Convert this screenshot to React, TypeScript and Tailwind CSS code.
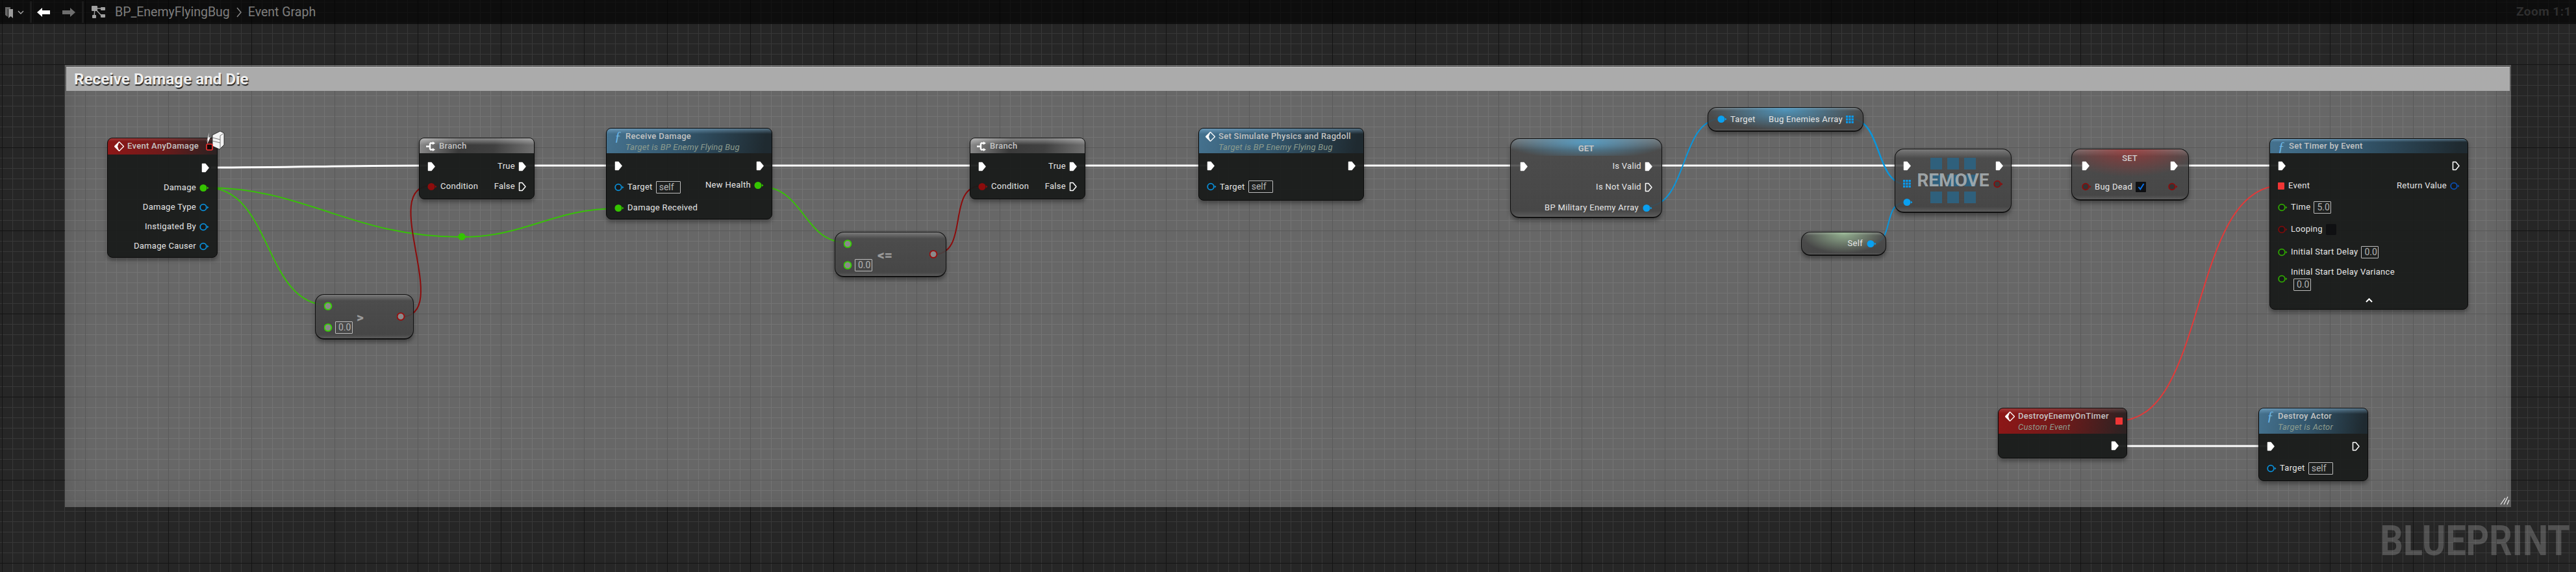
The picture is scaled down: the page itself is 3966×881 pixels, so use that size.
import React from "react";

const wires = [
  // exec
  { d: "M325 258 C 440 258, 540 255, 658 255", stroke: "#ffffff", width: 3 },
  { d: "M808 255 L 958 255", stroke: "#ffffff", width: 3 },
  { d: "M1173 255 L 1506 255", stroke: "#ffffff", width: 3 },
  { d: "M1656 255 L 1870 255", stroke: "#ffffff", width: 3 },
  { d: "M2085 255 L 2345 255", stroke: "#ffffff", width: 3 },
  { d: "M2540 255 L 2935 255", stroke: "#ffffff", width: 3 },
  { d: "M3080 255 L 3210 255", stroke: "#ffffff", width: 3 },
  { d: "M3345 255 L 3512 255", stroke: "#ffffff", width: 3 },
  { d: "M3256 687 L 3495 687", stroke: "#ffffff", width: 3 },
  // float
  { d: "M318 289 C 470 289, 540 365, 711 365", stroke: "#38c008", width: 2 },
  { d: "M711 365 C 810 365, 850 321, 952 321", stroke: "#38c008", width: 2 },
  { d: "M318 289 C 420 289, 405 470, 505 470", stroke: "#38c008", width: 2 },
  { d: "M1168 287 C 1240 287, 1235 374, 1305 374", stroke: "#38c008", width: 2 },
  // bool
  { d: "M617 488 C 700 488, 580 286, 664 286", stroke: "#8c0c0c", width: 2 },
  { d: "M1437 392 C 1495 392, 1455 286, 1512 286", stroke: "#8c0c0c", width: 2 },
  // object
  { d: "M2535 318 C 2600 318, 2585 183, 2650 183", stroke: "#0a96dc", width: 2 },
  { d: "M2848 183 C 2900 183, 2885 284, 2936 284", stroke: "#0a96dc", width: 2.5 },
  { d: "M2880 375 C 2920 375, 2895 311, 2936 311", stroke: "#0a96dc", width: 2 },
  // delegate
  { d: "M3262 648 C 3400 648, 3370 286, 3512 286", stroke: "#e23a3a", width: 2 },
];

function ExecPin({ filled = true }: { filled?: boolean }) {
  return (
    <svg width="12" height="15" viewBox="0 0 12 15" className="shrink-0">
      <path
        d="M1.5 1.5 H6 L11 7.5 L6 13.5 H1.5 Z"
        fill={filled ? "#ffffff" : "none"}
        stroke="#ffffff"
        strokeWidth="1.5"
        strokeLinejoin="round"
      />
    </svg>
  );
}

function DataPin({
  color,
  filled = false,
  inner = "#17191a",
  arrow = true,
  r = 4.8,
}: {
  color: string;
  filled?: boolean;
  inner?: string;
  arrow?: boolean;
  r?: number;
}) {
  return (
    <svg width="15" height="13" viewBox="0 0 15 13" className="shrink-0">
      <circle cx="6" cy="6.5" r={filled ? 5.5 : r} fill={filled ? color : inner} stroke={color} strokeWidth={filled ? 0 : 1.8} />
      {arrow && <path d="M12 4.5 L14.5 6.5 L12 8.5 Z" fill={color} />}
    </svg>
  );
}

function GridPin() {
  return (
    <svg width="12" height="12" viewBox="0 0 12 12" className="shrink-0">
      {[0, 4.3, 8.6].map((x) =>
        [0, 4.3, 8.6].map((y) => <rect key={`${x}-${y}`} x={x} y={y} width="3.2" height="3.2" fill="#0a9cf0" />),
      )}
    </svg>
  );
}

function EventIcon() {
  return (
    <svg width="15" height="15" viewBox="0 0 15 15" className="shrink-0">
      <path d="M7.5 0.5 L14.5 7.5 L7.5 14.5 L0.5 7.5 Z" fill="none" stroke="#ffffff" strokeWidth="1.4" />
      <path d="M7.5 0.5 L0.5 7.5 L7.5 14.5 L5 7.5 Z" fill="#ffffff" />
    </svg>
  );
}

function BranchIcon() {
  return (
    <svg width="15" height="15" viewBox="0 0 15 15" className="shrink-0">
      <path d="M0 7.5 H6 M6 2.5 V12.5 M6 2.5 H11 M6 12.5 H11" stroke="#ffffff" strokeWidth="2.4" fill="none" />
      <path d="M10 0 L14 2.5 L10 5 Z M10 10 L14 12.5 L10 15 Z" fill="#ffffff" />
    </svg>
  );
}

function FnIcon() {
  return <span className="w-[12px] shrink-0 font-['Liberation_Serif',serif] text-[21px] italic leading-none text-[#6db7e6]">ƒ</span>;
}

function ValueBox({ children, className = "" }: { children: React.ReactNode; className?: string }) {
  return (
    <span className={`flex h-[19px] shrink-0 items-center rounded-[1px] border border-[#bdbdbd] pl-[4px] text-[14px] text-[#b4b4b4] ${className}`}>
      {children}
    </span>
  );
}

function Row({ children, className = "" }: { children: React.ReactNode; className?: string }) {
  return <div className={`flex items-center justify-between ${className}`}>{children}</div>;
}

function Label({ children, className = "" }: { children: React.ReactNode; className?: string }) {
  return <span className={`whitespace-nowrap text-[13px] tracking-[0.3px] text-[#e6e6e6] ${className}`}>{children}</span>;
}

function Group({ children, className = "" }: { children: React.ReactNode; className?: string }) {
  return <span className={`flex items-center gap-[5px] ${className}`}>{children}</span>;
}

function Card({ className, children }: { className: string; children: React.ReactNode }) {
  return (
    <div className={`absolute flex flex-col overflow-hidden rounded-[8px] border border-[#0b0b0b] bg-[#191b1a]/95 shadow-[0_4px_6px_rgba(0,0,0,0.35)] ${className}`}>
      {children}
    </div>
  );
}

function Pure({ className, children }: { className: string; children: React.ReactNode }) {
  return (
    <div className={`absolute overflow-hidden rounded-[14px] border border-b-2 border-[#111111] bg-[linear-gradient(180deg,rgba(125,125,125,0.88),rgba(72,72,72,0.88)_14%,rgba(66,66,66,0.88)_92%,rgba(90,90,90,0.9))] shadow-[0_4px_6px_rgba(0,0,0,0.35)] ${className}`}>
      {children}
    </div>
  );
}

const blueHeader =
  "bg-[linear-gradient(180deg,rgba(150,200,235,0.45),transparent_22%),linear-gradient(100deg,#45728f,#33566c_45%,#1f2a30_95%)]";
const redHeader =
  "bg-[linear-gradient(180deg,rgba(255,200,200,0.18),transparent_20%),linear-gradient(100deg,#8e1717,#6f1a1a_50%,#2c2222_98%)]";
const grayHeader =
  "bg-[linear-gradient(180deg,rgba(255,255,255,0.4),transparent_45%),linear-gradient(100deg,#8c8c8c,#3a3a3a_35%,#404040_65%,#707070)]";

function Header({
  tone,
  icon,
  title,
  sub,
  className = "",
}: {
  tone: string;
  icon: React.ReactNode;
  title: string;
  sub?: string;
  className?: string;
}) {
  return (
    <div className={`flex shrink-0 gap-[5px] pl-[10px] ${tone} ${className}`}>
      <span className="flex h-[24px] items-center">{icon}</span>
      <div className="flex flex-col">
        <span className="flex h-[24px] items-center whitespace-nowrap text-[13px] font-medium tracking-[0.3px] text-[#c4c4c4]">{title}</span>
        {sub && <span className="-mt-[3px] whitespace-nowrap text-[13px] italic leading-[16px] tracking-[0.2px] text-[#8d9c8e]">{sub}</span>}
      </div>
    </div>
  );
}

function BranchNode({ className }: { className: string }) {
  return (
    <Card className={className}>
      <Header tone={grayHeader} icon={<BranchIcon />} title="Branch" className="h-[23px]" />
      <div className="flex flex-col px-[12px] pt-[4px]">
        <Row className="h-[32px]">
          <ExecPin />
          <Group>
            <Label>True</Label>
            <ExecPin />
          </Group>
        </Row>
        <Row className="h-[30px]">
          <Group>
            <DataPin color="#8c0c0c" filled />
            <Label>Condition</Label>
          </Group>
          <Group>
            <Label>False</Label>
            <ExecPin filled={false} />
          </Group>
        </Row>
      </div>
    </Card>
  );
}

function CompareNode({ className, op, opClass }: { className: string; op: string; opClass: string }) {
  return (
    <Pure className={className}>
      <div className="flex h-full items-center pl-[13px] pr-[5px]">
        <div className="flex flex-col">
          <div className="flex h-[33px] items-center">
            <DataPin color="#35d400" inner="#8a8a8a" arrow={false} r={5.4} />
          </div>
          <div className="flex h-[33px] items-center gap-[2px]">
            <DataPin color="#35d400" inner="#8a8a8a" arrow={false} r={5.4} />
            <ValueBox className="w-[27px]">0.0</ValueBox>
          </div>
        </div>
        <span className={`mt-[4px] text-[21px] font-black leading-none text-[#9a9a9a] ${opClass}`}>{op}</span>
        <span className="ml-auto mr-[5px]">
          <DataPin color="#9a0c0c" inner="#8a8a8a" arrow={false} r={5.4} />
        </span>
      </div>
    </Pure>
  );
}

function TargetRow({ className = "" }: { className?: string }) {
  return (
    <Group className={className}>
      <DataPin color="#0a8fd8" />
      <Label>Target</Label>
      <ValueBox className="w-[38px]">self</ValueBox>
    </Group>
  );
}

export default function App() {
  return (
    <div className="relative h-[881px] w-full overflow-hidden bg-[#262626] bg-[linear-gradient(#141414_1px,transparent_1px),linear-gradient(90deg,#141414_1px,transparent_1px),linear-gradient(#383838_1px,transparent_1px),linear-gradient(90deg,#383838_1px,transparent_1px)] bg-[size:128px_128px,128px_128px,16px_16px,16px_16px] bg-[position:0_99px,3px_0,0_3px,3px_0] font-['Roboto',sans-serif]">
      {/* comment box */}
      <div className="absolute left-[100px] top-[100px] h-[681px] w-[3766px] bg-white/30 px-[2px] pt-[3px] shadow-[inset_0_0_40px_rgba(0,0,0,0.12)]">
        <div className="flex h-[37px] items-center border-t border-t-[#c4c4c4] bg-[#ababab] pl-[12px] text-[24px] font-bold tracking-[0.1px] text-[#efefef] [text-shadow:1px_2px_1px_#222222]">
          Receive Damage and Die
        </div>
        <svg width="15" height="14" viewBox="0 0 15 14" className="absolute bottom-[3px] right-[2px]">
          <path d="M1 13 L8 3 M6 13 L12 1 M11 13 L14 6" stroke="#f0f0f0" strokeWidth="1.2" fill="none" />
        </svg>
      </div>

      {/* wires */}
      <svg className="absolute inset-0 h-full w-full">
        {wires.map((w) => (
          <path key={w.d} d={w.d} stroke={w.stroke} strokeWidth={w.width} fill="none" />
        ))}
      </svg>

      {/* Event AnyDamage */}
      <Card className="left-[165px] top-[212px] h-[185px] w-[170px]">
        <Header tone={redHeader} icon={<EventIcon />} title="Event AnyDamage" className="h-[25px]" />
        <div className="flex flex-col items-end px-[12px] pt-[5px]">
          <Row className="h-[31px]">
            <ExecPin />
          </Row>
          {["Damage", "Damage Type", "Instigated By", "Damage Causer"].map((name, i) => (
            <Row key={name} className="h-[30px]">
              <Group>
                <Label>{name}</Label>
                {i === 0 ? <DataPin color="#35c400" filled /> : <DataPin color="#0a8fd8" />}
              </Group>
            </Row>
          ))}
        </div>
      </Card>
      {/* delegate pin and cube sit over the corner of the node */}
      <svg width="40" height="34" viewBox="0 0 40 34" className="absolute left-[315px] top-[199px]">
        <path d="M3 20 L7 5 L6 13 L9 12 L4 23 L5 15 Z" fill="#ffffff" />
        <path d="M12 9 L24 3 L30 6 V24 L23 31 L12 26 Z" fill="#f2f2f2" stroke="#111111" strokeWidth="0.8" />
        <path d="M24 10 V30 M24 10 L30 6 M12 13 L24 16 M12 18 L24 21" stroke="#777777" strokeWidth="1" fill="none" />
        <rect x="3" y="23" width="9" height="9" rx="1.5" fill="#150505" stroke="#f23030" strokeWidth="1.6" />
      </svg>

      <BranchNode className="left-[645px] top-[212px] h-[95px] w-[178px]" />
      <CompareNode className="left-[485px] top-[453px] h-[70px] w-[152px]" op=">" opClass="ml-[6px]" />

      {/* reroute knot */}
      <span className="absolute left-[705px] top-[358px]">
        <DataPin color="#35c400" filled />
      </span>

      {/* Receive Damage */}
      <Card className="left-[933px] top-[197px] h-[141px] w-[256px]">
        <Header tone={blueHeader} icon={<FnIcon />} title="Receive Damage" sub="Target is BP Enemy Flying Bug" className="h-[38px] pl-[12px]" />
        <div className="flex flex-col px-[12px] pt-[3px]">
          <Row className="h-[32px]">
            <ExecPin />
            <ExecPin />
          </Row>
          <Row className="h-[34px]">
            <TargetRow />
            <Group className="mb-[6px]">
              <Label>New Health</Label>
              <DataPin color="#35c400" filled />
            </Group>
          </Row>
          <Row className="h-[30px]">
            <Group>
              <DataPin color="#35c400" filled />
              <Label>Damage Received</Label>
            </Group>
          </Row>
        </div>
      </Card>

      <CompareNode className="left-[1285px] top-[357px] h-[70px] w-[172px]" op="<=" opClass="ml-[8px]" />
      <BranchNode className="left-[1493px] top-[212px] h-[95px] w-[178px]" />

      {/* Set Simulate Physics and Ragdoll */}
      <Card className="left-[1845px] top-[197px] h-[112px] w-[255px]">
        <Header tone={blueHeader} icon={<EventIcon />} title="Set Simulate Physics and Ragdoll" sub="Target is BP Enemy Flying Bug" className="h-[38px]" />
        <div className="flex flex-col px-[12px] pt-[3px]">
          <Row className="h-[32px]">
            <ExecPin />
            <ExecPin />
          </Row>
          <Row className="h-[33px]">
            <TargetRow />
          </Row>
        </div>
      </Card>

      {/* GET */}
      <Pure className="left-[2325px] top-[213px] h-[123px] w-[234px]">
        <div className="bg-[radial-gradient(ellipse_55%_100%_at_50%_20%,rgba(80,170,220,0.75),transparent)] pt-[4px] text-center text-[13px] font-bold text-[#c4c4c4]">
          <span className="block h-[22px] leading-[22px]">GET</span>
        </div>
        <div className="flex flex-col px-[14px]">
          <Row className="h-[32px]">
            <ExecPin />
            <Group>
              <Label>Is Valid</Label>
              <ExecPin />
            </Group>
          </Row>
          <Row className="h-[32px]">
            <span />
            <Group>
              <Label>Is Not Valid</Label>
              <ExecPin filled={false} />
            </Group>
          </Row>
          <Row className="h-[32px]">
            <span />
            <Group className="gap-[6px]">
              <Label>BP Military Enemy Array</Label>
              <DataPin color="#0aa0f0" filled />
            </Group>
          </Row>
        </div>
      </Pure>

      {/* Bug Enemies Array getter */}
      <Pure className="left-[2629px] top-[165px] h-[38px] w-[240px]">
        <Row className="h-full bg-[radial-gradient(ellipse_50%_90%_at_50%_10%,rgba(80,170,220,0.75),transparent)] px-[14px]">
          <Group>
            <DataPin color="#0aa0f0" filled />
            <Label>Target</Label>
          </Group>
          <Group>
            <Label>Bug Enemies Array</Label>
            <GridPin />
          </Group>
        </Row>
      </Pure>

      {/* REMOVE */}
      <Pure className="left-[2917px] top-[229px] h-[99px] w-[180px]">
        <div className="flex justify-between px-[12px] pt-[11px]">
          <div className="flex flex-col">
            <div className="flex h-[28px] items-center">
              <ExecPin />
            </div>
            <div className="flex h-[28px] items-center">
              <GridPin />
            </div>
            <div className="flex h-[28px] items-center">
              <DataPin color="#0aa0f0" filled />
            </div>
          </div>
          <div className="relative mt-[2px] self-start">
            <div className="grid grid-cols-3 gap-[8px]">
              {Array.from({ length: 9 }).map((_, i) => (
                <span key={i} className="h-[18px] w-[18px] bg-[#2f607c]" />
              ))}
            </div>
            <span className="absolute inset-0 flex items-center justify-center text-[28px] font-bold leading-none text-[#a9b0b3]/90">REMOVE</span>
          </div>
          <div className="flex flex-col">
            <div className="flex h-[28px] items-center justify-end">
              <ExecPin />
            </div>
            <div className="flex h-[28px] items-center justify-end">
              <DataPin color="#8c0c0c" inner="#3a3a3a" />
            </div>
          </div>
        </div>
      </Pure>

      {/* Self */}
      <Pure className="left-[2773px] top-[357px] h-[37px] w-[131px]">
        <div className="flex h-full items-center justify-end gap-[6px] bg-[radial-gradient(ellipse_50%_90%_at_50%_5%,rgba(175,215,170,0.7),transparent)] pr-[14px]">
          <Label>Self</Label>
          <DataPin color="#0aa0f0" filled />
        </div>
      </Pure>

      {/* SET */}
      <Pure className="left-[3189px] top-[229px] h-[80px] w-[181px]">
        <div className="h-full bg-[radial-gradient(ellipse_60%_55%_at_50%_0%,rgba(170,50,50,0.7),transparent)] pl-[15px] pr-[16px] pt-[9px]">
          <Row className="h-[32px]">
            <ExecPin />
            <span className="mb-[22px] text-[13px] font-medium text-[#cfcfcf]">SET</span>
            <ExecPin />
          </Row>
          <Row className="h-[33px]">
            <Group>
              <DataPin color="#8c0c0c" inner="#333333" />
              <Label>Bug Dead</Label>
              <span className="flex h-[16px] w-[16px] items-center justify-center rounded-[1px] bg-[#0f1012]">
                <svg width="11" height="11" viewBox="0 0 11 11">
                  <path d="M1.5 6 L4.2 9.5 L9.5 1" stroke="#0a6fe6" strokeWidth="2" fill="none" />
                </svg>
              </span>
            </Group>
            <DataPin color="#8c0c0c" inner="#333333" />
          </Row>
        </div>
      </Pure>

      {/* Set Timer by Event */}
      <Card className="left-[3494px] top-[213px] h-[264px] w-[306px]">
        <Header tone={blueHeader} icon={<FnIcon />} title="Set Timer by Event" className="h-[22px] pl-[12px]" />
        <div className="flex flex-col px-[12px] pt-[3px]">
          <Row className="h-[32px]">
            <ExecPin />
            <ExecPin filled={false} />
          </Row>
          <Row className="h-[30px]">
            <Group className="gap-[6px]">
              <span className="h-[11px] w-[10px] rounded-[1px] bg-[#f03535]" />
              <Label>Event</Label>
            </Group>
            <Group>
              <Label>Return Value</Label>
              <DataPin color="#0a4fb4" />
            </Group>
          </Row>
          <Row className="h-[36px] justify-start">
            <Group>
              <DataPin color="#2fa800" />
              <Label>Time</Label>
              <ValueBox className="w-[27px]">5.0</ValueBox>
            </Group>
          </Row>
          <Row className="h-[32px] justify-start">
            <Group>
              <DataPin color="#7c0a0a" />
              <Label>Looping</Label>
              <span className="h-[17px] w-[16px] rounded-[2px] bg-[#0f1012]" />
            </Group>
          </Row>
          <Row className="h-[38px] justify-start">
            <Group>
              <DataPin color="#2fa800" />
              <Label>Initial Start Delay</Label>
              <ValueBox className="w-[27px]">0.0</ValueBox>
            </Group>
          </Row>
          <Row className="h-[44px] justify-start">
            <Group>
              <DataPin color="#2fa800" />
              <span className="flex flex-col">
                <Label className="leading-[15px]">Initial Start Delay Variance</Label>
                <ValueBox className="ml-[4px] mt-[3px] w-[27px]">0.0</ValueBox>
              </span>
            </Group>
          </Row>
          <div className="flex justify-center pt-[8px]">
            <svg width="11" height="7" viewBox="0 0 11 7">
              <path d="M1 6 L5.5 1.5 L10 6" stroke="#ffffff" strokeWidth="2" fill="none" />
            </svg>
          </div>
        </div>
      </Card>

      {/* DestroyEnemyOnTimer */}
      <Card className="left-[3076px] top-[628px] h-[78px] w-[199px]">
        <div className="relative shrink-0">
          <Header tone={redHeader} icon={<EventIcon />} title="DestroyEnemyOnTimer" sub="Custom Event" className="h-[39px]" />
          <span className="absolute right-[6px] top-[14px] h-[11px] w-[11px] rounded-[1px] bg-[#f03535]" />
        </div>
        <div className="flex justify-end px-[12px] pt-[11px]">
          <ExecPin />
        </div>
      </Card>

      {/* Destroy Actor */}
      <Card className="left-[3477px] top-[628px] h-[113px] w-[169px]">
        <Header tone={blueHeader} icon={<FnIcon />} title="Destroy Actor" sub="Target is Actor" className="h-[39px] pl-[12px]" />
        <div className="flex flex-col px-[12px]">
          <Row className="h-[38px]">
            <ExecPin />
            <ExecPin filled={false} />
          </Row>
          <Row className="h-[30px]">
            <TargetRow />
          </Row>
        </div>
      </Card>

      {/* top bar */}
      <div className="absolute left-0 right-0 top-0 flex h-[37px] items-center justify-between bg-black/65 pr-[7px]">
        <div className="flex items-center text-[19.5px] text-[#7d7d7d]">
          <svg width="30" height="20" viewBox="0 0 30 20" className="ml-[7px]">
            <path d="M1 2 H9 V5 H5 V17 L1 14 Z" fill="#6a6a6a" />
            <path d="M6 5 H13 V19 L9.5 16 L6 19 Z" fill="#9a9a9a" />
            <path d="M21 8 L25 12 L29 8" stroke="#a8a8a8" strokeWidth="1.4" fill="none" />
          </svg>
          <span className="ml-[9px] h-[33px] w-[3px] bg-[#1b1b1b]" />
          <svg width="20" height="14" viewBox="0 0 20 14" className="ml-[8px]">
            <path d="M0 7 L8 0 V4 H20 V10 H8 V14 Z" fill="#ffffff" />
          </svg>
          <svg width="20" height="14" viewBox="0 0 20 14" className="ml-[19px]">
            <path d="M20 7 L12 0 V4 H0 V10 H12 V14 Z" fill="#6e6e6e" />
          </svg>
          <span className="ml-[10px] h-[33px] w-[3px] bg-[#1b1b1b]" />
          <svg width="23" height="21" viewBox="0 0 23 21" className="ml-[11px]">
            <path d="M6 5 L17 5 M6 5 L5 17 M6 5 L17 17" stroke="#a0a0a0" strokeWidth="1.4" />
            <rect x="1" y="1" width="9" height="8" rx="1" fill="#a0a0a0" />
            <rect x="15" y="3" width="7" height="5" rx="1" fill="#a0a0a0" />
            <rect x="2" y="15" width="6" height="5" rx="1" fill="#a0a0a0" />
            <rect x="15" y="14" width="7" height="5" rx="1" fill="#a0a0a0" />
          </svg>
          <span className="ml-[14px]">BP_EnemyFlyingBug</span>
          <svg width="10" height="16" viewBox="0 0 10 16" className="ml-[9px]">
            <path d="M2 1 L8 8 L2 15" stroke="#8a8a8a" strokeWidth="1.4" fill="none" />
          </svg>
          <span className="ml-[9px]">Event Graph</span>
        </div>
        <span className="text-[19px] font-bold tracking-[0.5px] text-[#2f2f2f]">Zoom 1:1</span>
      </div>

      {/* watermark */}
      <span className="absolute bottom-[15px] right-[10px] origin-right scale-x-[0.865] text-[64px] font-bold leading-none text-white/20">BLUEPRINT</span>
    </div>
  );
}
